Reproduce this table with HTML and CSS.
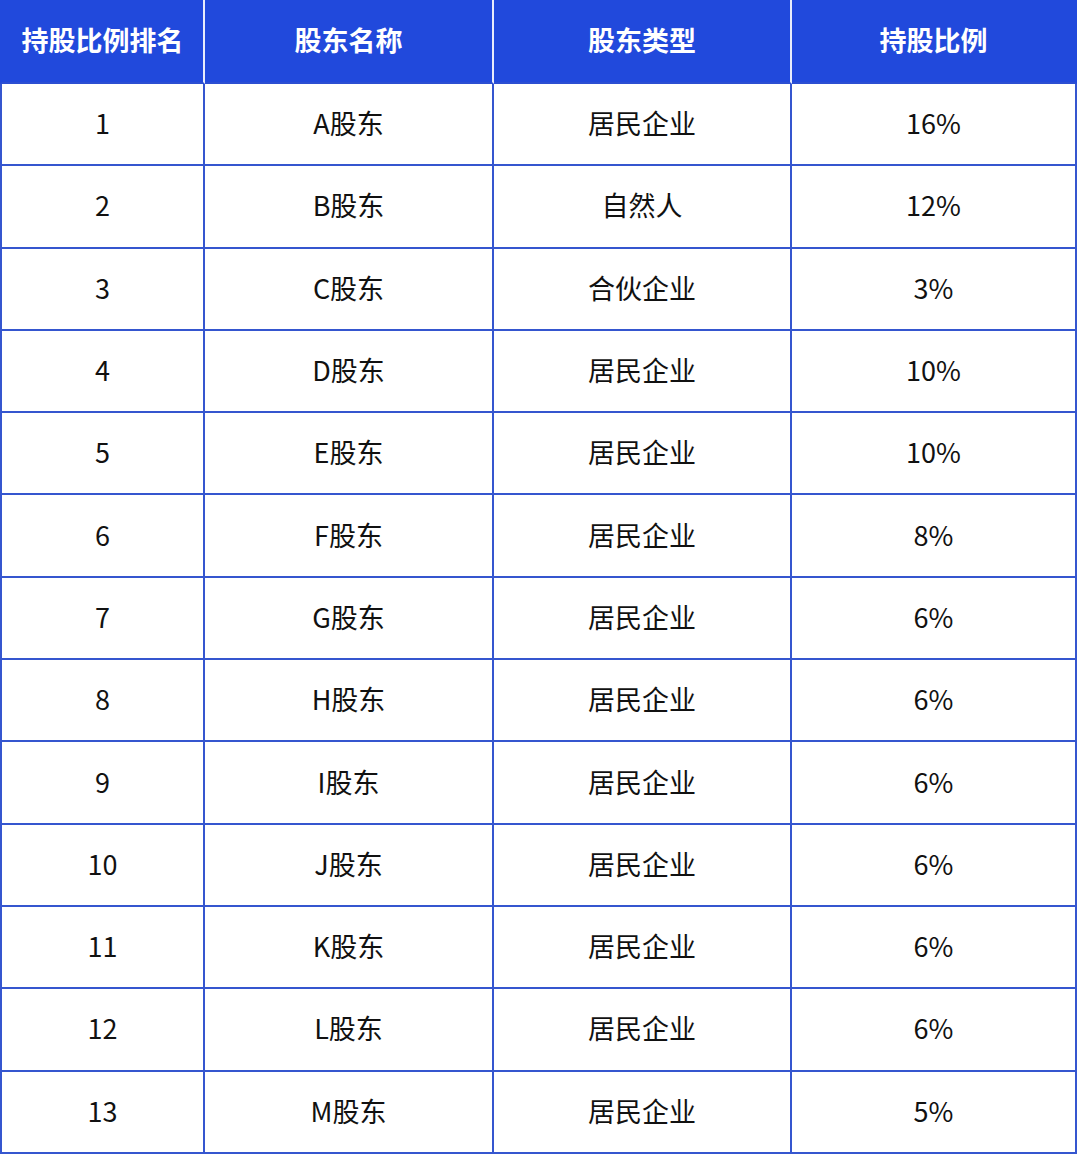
FILE: index.html
```html
<!DOCTYPE html>
<html lang="zh-CN">
<head>
<meta charset="utf-8">
<title>持股比例</title>
<link rel="stylesheet" href="styles.css">
</head>
<body>
<div class="table">
  <div class="row head">
    <div class="cell">持股比例排名</div>
    <div class="cell">股东名称</div>
    <div class="cell">股东类型</div>
    <div class="cell">持股比例</div>
  </div>
  <div class="row"><div class="cell">1</div><div class="cell">A股东</div><div class="cell">居民企业</div><div class="cell">16%</div></div>
  <div class="row"><div class="cell">2</div><div class="cell">B股东</div><div class="cell">自然人</div><div class="cell">12%</div></div>
  <div class="row"><div class="cell">3</div><div class="cell">C股东</div><div class="cell">合伙企业</div><div class="cell">3%</div></div>
  <div class="row"><div class="cell">4</div><div class="cell">D股东</div><div class="cell">居民企业</div><div class="cell">10%</div></div>
  <div class="row"><div class="cell">5</div><div class="cell">E股东</div><div class="cell">居民企业</div><div class="cell">10%</div></div>
  <div class="row"><div class="cell">6</div><div class="cell">F股东</div><div class="cell">居民企业</div><div class="cell">8%</div></div>
  <div class="row"><div class="cell">7</div><div class="cell">G股东</div><div class="cell">居民企业</div><div class="cell">6%</div></div>
  <div class="row"><div class="cell">8</div><div class="cell">H股东</div><div class="cell">居民企业</div><div class="cell">6%</div></div>
  <div class="row"><div class="cell">9</div><div class="cell">I股东</div><div class="cell">居民企业</div><div class="cell">6%</div></div>
  <div class="row"><div class="cell">10</div><div class="cell">J股东</div><div class="cell">居民企业</div><div class="cell">6%</div></div>
  <div class="row"><div class="cell">11</div><div class="cell">K股东</div><div class="cell">居民企业</div><div class="cell">6%</div></div>
  <div class="row"><div class="cell">12</div><div class="cell">L股东</div><div class="cell">居民企业</div><div class="cell">6%</div></div>
  <div class="row"><div class="cell">13</div><div class="cell">M股东</div><div class="cell">居民企业</div><div class="cell">5%</div></div>
</div>
</body>
</html>
```
FILE: styles.css
```css
* { box-sizing: border-box; }
html, body { margin: 0; padding: 0; background: #ffffff; }
body {
  font-family: "Noto Sans CJK SC", "Noto Sans", sans-serif;
  color: #111111;
}
.table {
  width: 1077px;
  display: flex;
  flex-direction: column;
}
.row {
  display: grid;
  grid-template-columns: 205px 289px 298px 285px;
  height: 82.3px;
}
.cell {
  display: flex;
  align-items: center;
  justify-content: center;
  font-size: 27px;
  padding-bottom: 3px;
  border-right: 2px solid #3556cf;
  border-bottom: 2px solid #3556cf;
}
.cell:first-child { border-left: 2px solid #3556cf; }
.head {
  height: 84px;
  background: #2149dc;
}
.head .cell {
  color: #ffffff;
  font-weight: 700;
  border-right: 2px solid #e8ecfb;
  border-bottom: 2px solid #2c4fd2;
}
.head .cell:first-child { border-left: 2px solid #2149dc; }
.head .cell:last-child { border-right: 2px solid #2149dc; }
```
